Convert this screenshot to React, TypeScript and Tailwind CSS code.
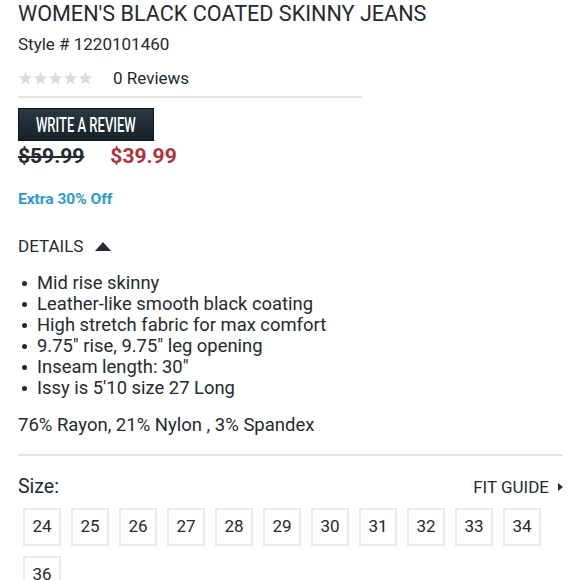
import React from "react";

const Star = () => (
  <svg width="15" height="15" viewBox="0 0 24 23" className="fill-[#dcdcdc]">
    <path d="M12 0l2.9 7.6 8.1.5-6.3 5.1 2.1 7.9L12 16.7l-6.8 4.4 2.1-7.9L1 8.1l8.1-.5z" />
  </svg>
);

const sizes = ["24", "25", "26", "27", "28", "29", "30", "31", "32", "33", "34", "36"];

export default function App() {
  return (
    <div className="w-[579px] h-[580px] overflow-hidden bg-white text-[#232a31] font-['Roboto',sans-serif] pl-[18px]">
      <h1 className="text-[21.6px] leading-[26px] pt-[1px]">WOMEN'S BLACK COATED SKINNY JEANS</h1>
      <div className="text-[17px] leading-[20px] mt-[7px]">Style # 1220101460</div>
      <div className="flex items-center mt-[14px] w-[344px] border-b-2 border-[#e3e3e3] pb-[8px]">
        <div className="flex gap-0">
          <Star /><Star /><Star /><Star /><Star />
        </div>
        <span className="ml-[20px] text-[17px] leading-[20px]">0 Reviews</span>
      </div>
      <div className="mt-[10px] w-[136px] h-[33px] bg-gradient-to-b from-[#2a3944] to-[#17222a] border border-[#0e151a] flex items-center justify-center">
        <span className="inline-block text-white text-[20px] leading-none font-medium scale-x-[0.65] whitespace-nowrap">WRITE A REVIEW</span>
      </div>
      <div className="flex items-center mt-[2px] text-[21px] leading-[26px] font-bold">
        <span className="line-through text-[#232a31]">$59.99</span>
        <span className="ml-[26px] text-[#b2303b]">$39.99</span>
      </div>
      <div className="mt-[20px] text-[15.5px] leading-[20px] font-bold text-[#2a9ad0]">Extra 30% Off</div>
      <div className="flex items-center mt-[27px] text-[17px] leading-[20px]">
        <span>DETAILS</span>
        <svg width="16" height="9" viewBox="0 0 16 9" className="ml-[12px] fill-[#232a31]">
          <path d="M8 0L16 9H0z" />
        </svg>
      </div>
      <ul className="mt-[16px] text-[18.4px] leading-[21px]">
        {[
          "Mid rise skinny",
          "Leather-like smooth black coating",
          "High stretch fabric for max comfort",
          '9.75" rise, 9.75" leg opening',
          'Inseam length: 30"',
          "Issy is 5'10 size 27 Long",
        ].map((t) => (
          <li key={t} className="flex items-center">
            <span className="w-[19px] flex">
              <span className="ml-[4px] mt-[2px] w-[5px] h-[5px] rounded-full bg-[#232a31]" />
            </span>
            <span>{t}</span>
          </li>
        ))}
      </ul>
      <div className="mt-[16px] text-[18.5px] leading-[22px]">76% Rayon, 21% Nylon , 3% Spandex</div>
      <div className="mt-[18px] w-[545px] border-t-2 border-[#e3e3e3]" />
      <div className="flex items-center justify-between w-[545px] mt-[20px]">
        <span className="text-[19.5px] leading-[22px]">Size:</span>
        <span className="flex items-center text-[17px] leading-[20px]">
          FIT GUIDE
          <svg width="5" height="8" viewBox="0 0 5 8" className="ml-[9px] fill-[#232a31]">
            <path d="M0 0L5 4L0 8z" />
          </svg>
        </span>
      </div>
      <div className="flex flex-wrap gap-x-[10px] gap-y-[10px] mt-[10px] ml-[5px] w-[540px]">
        {sizes.map((s) => (
          <div key={s} className="w-[38px] h-[38px] border-2 border-[#ebebeb] flex items-center justify-center text-[17px]">
            {s}
          </div>
        ))}
      </div>
    </div>
  );
}
